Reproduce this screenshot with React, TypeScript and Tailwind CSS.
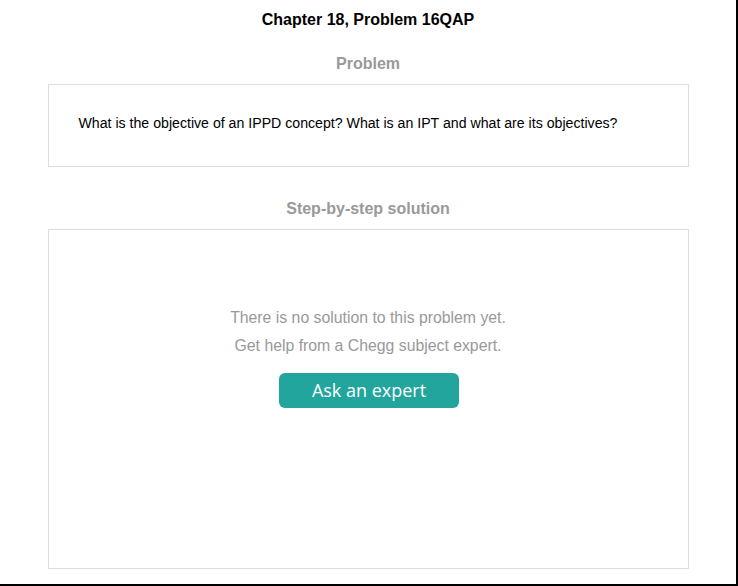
export default function App() {
  return (
    <div
      className="w-[738px] h-[586px] bg-white border-r-2 border-b-2 border-black flex flex-col items-center"
      style={{ fontFamily: '"Liberation Sans", Arial, sans-serif' }}
    >
      <h1 className="mt-[10px] text-[16px] leading-[20px] font-bold text-black">
        Chapter 18, Problem 16QAP
      </h1>

      <h2 className="mt-[24px] text-[16px] leading-[20px] font-bold text-[#999999]">Problem</h2>
      <div className="mt-[10px] w-[641px] h-[83px] border border-[#dddddd] px-[30px] pt-[28px]">
        <p className="text-[14.15px] leading-[20px] text-black">
          What is the objective of an IPPD concept? What is an IPT and what are its objectives?
        </p>
      </div>

      <h2 className="mt-[32px] text-[16px] leading-[20px] font-bold text-[#999999]">
        Step-by-step solution
      </h2>
      <div className="mt-[10px] w-[641px] h-[340px] border border-[#dddddd] flex flex-col items-center pt-[74px]">
        <p className="text-[15.8px] leading-[28px] text-[#999999]">There is no solution to this problem yet.</p>
        <p className="text-[15.8px] leading-[28px] text-[#999999]">Get help from a Chegg subject expert.</p>
        <button
          className="mt-[13px] ml-[2px] w-[180px] h-[35px] rounded-[6px] bg-[#21a59c] text-white text-[18px] leading-[35px]"
          style={{ fontFamily: '"Open Sans", "Noto Sans", sans-serif' }}
        >
          Ask an expert
        </button>
      </div>
    </div>
  );
}
